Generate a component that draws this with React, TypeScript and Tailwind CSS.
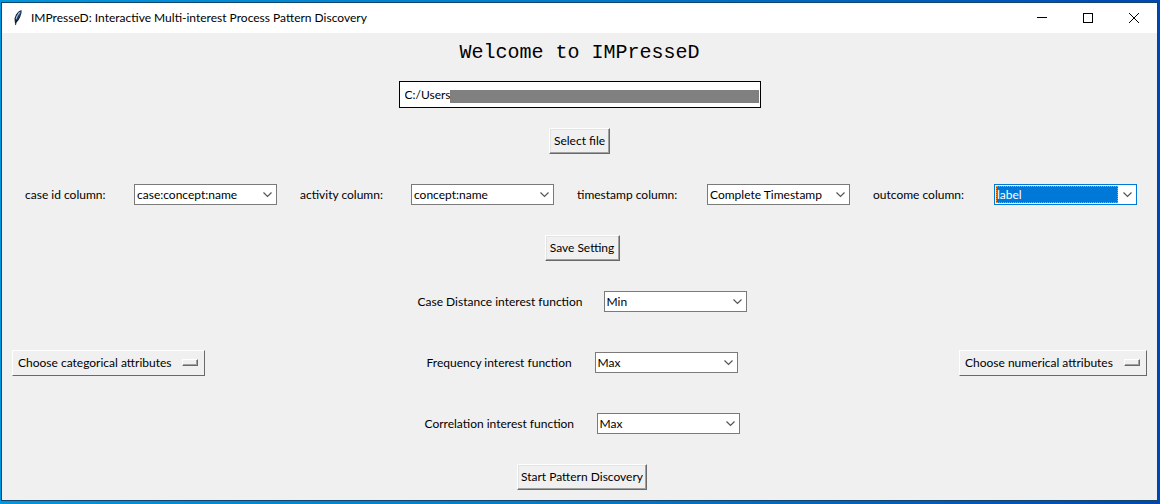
import { useId, useState, type ReactNode } from "react";

function FeatherIcon() {
  return (
    <svg width="10" height="16" viewBox="0 0 10 16" aria-hidden="true">
      <path d="M8.500 0 5.500 1.500 3 4.500 1.500 8.500 1.800 12 2.200 15.500 3 12.500 5 11 7 7.500 8.500 3Z" fill="#15202e" />
      <path d="M7.500 1.200 5.500 3.200 3.300 7.500 2.800 10.500 4.300 9.800 6.200 6.500 7.600 3Z" fill="#5288cc" />
      <path d="M6.500 2 4 6 3 9" fill="none" stroke="#a9cdf0" strokeWidth="0.900" />
      <path d="M6.500 4.500 4.200 9 2.500 15" fill="none" stroke="#0c0c10" strokeWidth="0.700" />
    </svg>
  );
}

function TitleBar() {
  return (
    <header className="flex h-[30px] items-center justify-between bg-white">
      <div className="flex items-center gap-2 pl-[11px]">
        <FeatherIcon />
        <span className="text-xs">IMPresseD: Interactive Multi-interest Process Pattern Discovery</span>
      </div>
      <div className="flex h-full">
        <button aria-label="Minimize" className="flex w-[46px] items-center justify-center">
          <svg width="10" height="10" viewBox="0 0 10 10" shapeRendering="crispEdges">
            <path d="M0 4.500H10" stroke="#000" />
          </svg>
        </button>
        <button aria-label="Maximize" className="flex w-[46px] items-center justify-center">
          <svg width="10" height="10" viewBox="0 0 10 10" shapeRendering="crispEdges">
            <path d="M0.500 0.500H9.500V9.500H0.500Z" stroke="#000" fill="none" />
          </svg>
        </button>
        <button aria-label="Close" className="flex w-[46px] items-center justify-center">
          <svg width="10" height="10" viewBox="0 0 10 10">
            <path d="M0 0 10 10M10 0 0 10" stroke="#000" />
          </svg>
        </button>
      </div>
    </header>
  );
}

function RaisedButton({ children, className }: { children: ReactNode; className: string }) {
  return (
    <button
      className={`h-[26px] whitespace-nowrap border border-t-white border-l-white border-r-[#696969] border-b-[#696969] bg-[#f0f0f0] text-center text-xs shadow-[inset_-1px_-1px_0_#a0a0a0,inset_1px_1px_0_#e3e3e3] ${className}`}
    >
      {children}
    </button>
  );
}

function MenuButton({ children, className }: { children: ReactNode; className: string }) {
  return (
    <button
      className={`flex h-[26px] items-center justify-between whitespace-nowrap border border-t-white border-l-white border-r-[#696969] border-b-[#696969] bg-[#f0f0f0] pr-1.5 pl-[5px] text-xs ${className}`}
    >
      {children}
      <span className="h-[7px] w-4 border border-t-white border-l-white border-r-[#696969] border-b-[#696969] shadow-[inset_-1px_-1px_0_#a0a0a0]" />
    </button>
  );
}

type ComboProps = { label: string; options: string[]; highlighted?: boolean; className?: string };

function Combo({ label, options, highlighted = false, className = "" }: ComboProps) {
  const id = useId();
  const [value, setValue] = useState(options[0]);
  return (
    <div className={`flex items-center justify-between ${className}`}>
      <label htmlFor={id} className="whitespace-nowrap text-xs">
        {label}
      </label>
      <div
        className={`relative h-[21px] w-[143px] shrink-0 border bg-white ${highlighted ? "border-[#0078d7]" : "border-[#7a7a7a]"}`}
      >
        <select
          id={id}
          value={value}
          onChange={(e) => setValue(e.target.value)}
          className={`block h-full w-full appearance-none py-px pr-[18px] pl-px indent-px text-xs leading-4 outline-none ${
            highlighted ? "bg-[#0078d7] bg-clip-content text-white" : "bg-transparent"
          }`}
        >
          {options.map((o) => (
            <option key={o}>{o}</option>
          ))}
        </select>
        {highlighted && (
          <span className="pointer-events-none absolute inset-y-px right-[18px] left-px border border-dotted border-[#ff8728]" />
        )}
        <svg
          className="pointer-events-none absolute top-[7px] right-1"
          width="9"
          height="6"
          viewBox="0 0 9 6"
          aria-hidden="true"
        >
          <path d="M0.500 0.500 4.500 4.500 8.500 0.500" fill="none" stroke="#555" strokeWidth="1.200" />
        </svg>
      </div>
    </div>
  );
}

export default function App() {
  const columns = ["case:concept:name", "concept:name", "Complete Timestamp", "label"];
  const from = (first: string) => [first, ...columns.filter((c) => c !== first)];

  return (
    <div className="min-h-screen bg-linear-to-r from-[#0095dc] via-[#007ac8] to-[#0047b5] pt-[2px] pr-[2px] pb-[3px] pl-px font-[Lato,sans-serif] text-black">
      <div className="border border-[#12456b] bg-[#f0f0f0]">
        <TitleBar />
        <main className="flex flex-col items-center px-2.5 pt-1.5 pb-2.5">
          <h1 className="font-['Liberation_Mono',monospace] text-xl leading-7">Welcome to IMPresseD</h1>

          <div className="mt-3.5 flex h-[27px] w-[362px] border border-black bg-white pr-px pl-[5px]">
            <input
              aria-label="File path"
              defaultValue="C:/Users/"
              className="h-full w-[45px] text-xs outline-none"
            />
            <div className="mb-1 h-[13px] flex-1 self-end bg-[#808080]" />
          </div>

          <RaisedButton className="mt-5 w-[61px]">Select file</RaisedButton>

          <div className="mt-[30px] grid w-full grid-cols-[252fr_254fr_273fr_264fr] gap-[23px] pr-2.5 pl-[13px]">
            <Combo label="case id column:" options={columns} />
            <Combo label="activity column:" options={from("concept:name")} />
            <Combo label="timestamp column:" options={from("Complete Timestamp")} />
            <Combo label="outcome column:" options={from("label")} highlighted />
          </div>

          <div className="mt-[30px] grid w-full grid-cols-[auto_1fr_auto] items-center">
            <MenuButton className="w-[193px]">Choose categorical attributes</MenuButton>
            <div className="flex flex-col items-center">
              <RaisedButton className="w-[75px]">Save Setting</RaisedButton>
              <div className="my-[30px] flex flex-col items-center gap-10">
                <Combo
                  label="Case Distance interest function"
                  options={["Min", "Max", "Average"]}
                  className="w-[329px]"
                />
                <Combo
                  label="Frequency interest function"
                  options={["Max", "Min"]}
                  className="w-[311px]"
                />
                <Combo
                  label="Correlation interest function"
                  options={["Max", "Min"]}
                  className="w-[315px]"
                />
              </div>
              <RaisedButton className="w-[130px]">Start Pattern Discovery</RaisedButton>
            </div>
            <MenuButton className="w-[188px]">Choose numerical attributes</MenuButton>
          </div>
        </main>
      </div>
    </div>
  );
}
